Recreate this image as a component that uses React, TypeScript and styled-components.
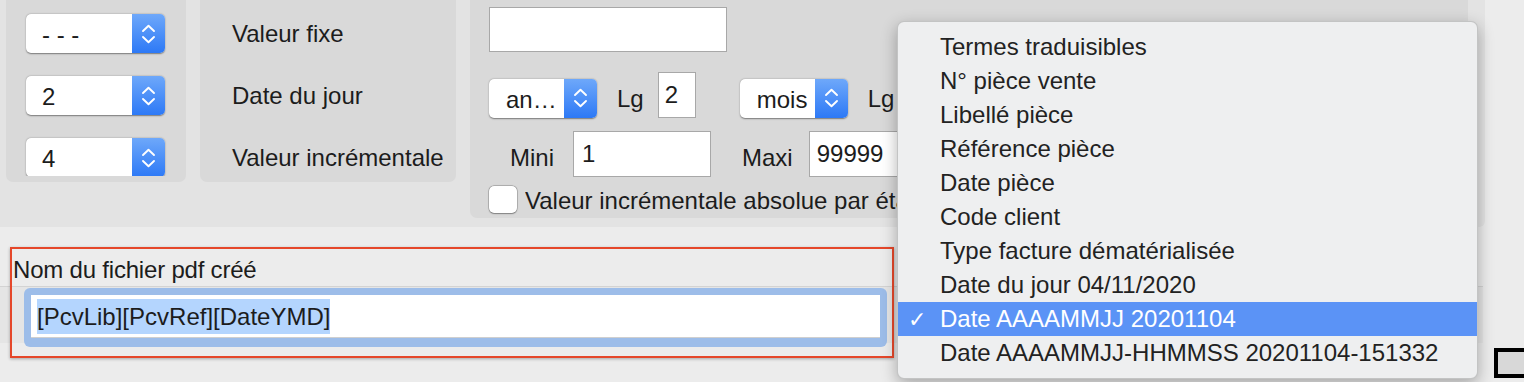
import React from 'react';
import styled, { createGlobalStyle } from 'styled-components';

const GlobalStyle = createGlobalStyle`
  body {
    margin: 0;
    background-color: #ececec;
    font-family: "Liberation Sans", Arial, sans-serif;
    color: #1c1c1c;
    overflow: hidden;
  }
`;

const Page = styled.div`
  position: relative;
  width: 1524px;
  height: 382px;
  overflow: hidden;
`;

const TopArea = styled.div`
  display: flex;
  align-items: flex-start;
  gap: 14px;
  width: 1485px;
  height: 227px;
  padding-left: 6px;
  box-sizing: border-box;
  background-color: #e3e3e3;
  border-bottom-right-radius: 6px;
`;

const Panel = styled.div<{ $w: number; $h: number }>`
  width: ${p => p.$w}px;
  height: ${p => p.$h}px;
  background-color: #d9d9d9;
  border-radius: 0 0 7px 7px;
  box-sizing: border-box;
  flex-shrink: 0;
`;

const SelectColumn = styled.div`
  display: flex;
  flex-direction: column;
  gap: 23px;
  padding: 14px 0 0 20px;
  height: 176px;
  box-sizing: border-box;
  overflow: hidden;
`;

const LabelColumn = styled.div`
  display: flex;
  flex-direction: column;
  gap: 34px;
  padding: 20px 0 0 32px;
`;

const Label = styled.span<{ $pt?: number; $ml?: number }>`
  font-size: 24px;
  line-height: 28px;
  padding-top: ${p => p.$pt || 0}px;
  margin-left: ${p => p.$ml || 0}px;
  white-space: nowrap;
  flex-shrink: 0;
`;

const ClippedLabel = styled(Label)`
  width: 372px;
  overflow: hidden;
`;

const SelectBox = styled.div<{ $w: number; $mt?: number; $ml?: number }>`
  display: flex;
  width: ${p => p.$w}px;
  height: 39px;
  margin-top: ${p => p.$mt || 0}px;
  margin-left: ${p => p.$ml || 0}px;
  border-radius: 5px;
  background-color: #fff;
  box-shadow: 0 0.5px 1.5px rgba(0, 0, 0, 0.45);
  flex-shrink: 0;
`;

const SelectText = styled.span<{ $pl: number }>`
  flex: 1;
  font-size: 24px;
  line-height: 28px;
  padding: 7px 0 0 ${p => p.$pl}px;
  white-space: nowrap;
  overflow: hidden;
`;

const SelectArrows = styled.div`
  width: 33px;
  display: flex;
  align-items: center;
  justify-content: center;
  border-radius: 0 5px 5px 0;
  background: linear-gradient(#6ea8fa, #2d79f6);
`;

const Arrows = () => (
  <svg width="15" height="20" viewBox="0 0 15 20" fill="none" stroke="#fff" strokeWidth="1.9" strokeLinecap="round" strokeLinejoin="round">
    <path d="M2 7 L7.5 1.8 L13 7" />
    <path d="M2 13 L7.5 18.2 L13 13" />
  </svg>
);

const Select = ({ value, width, pl, mt, ml }: { value: string; width: number; pl: number; mt?: number; ml?: number }) => (
  <SelectBox $w={width} $mt={mt} $ml={ml}>
    <SelectText $pl={pl}>{value}</SelectText>
    <SelectArrows>
      <Arrows />
    </SelectArrows>
  </SelectBox>
);

const FormColumn = styled.div`
  display: flex;
  flex-direction: column;
  padding: 7px 0 0 19px;
`;

const Row = styled.div<{ $h: number; $mt: number }>`
  display: flex;
  align-items: center;
  height: ${p => p.$h}px;
  margin-top: ${p => p.$mt}px;
`;

const TextInput = styled.div<{ $w: number; $h: number; $pl?: number; $ml?: number }>`
  width: ${p => p.$w}px;
  height: ${p => p.$h}px;
  margin-left: ${p => p.$ml || 0}px;
  padding: 8px 0 0 ${p => p.$pl || 6}px;
  box-sizing: border-box;
  background-color: #fff;
  border: 1px solid #a8a8a8;
  font-size: 24px;
  line-height: 28px;
  flex-shrink: 0;
`;

const Checkbox = styled.div`
  width: 28px;
  height: 27px;
  box-sizing: border-box;
  border-radius: 5px;
  background-color: #fff;
  box-shadow: 0 0 0 0.5px rgba(0, 0, 0, 0.3), 0 0.5px 1.5px rgba(0, 0, 0, 0.3);
  margin-right: 8px;
  flex-shrink: 0;
`;

const BottomArea = styled.div`
  height: 155px;
  padding: 20px 0 0 10px;
  box-sizing: border-box;
  background:
    linear-gradient(#d3d3d3, #d3d3d3) 0 59px / 1483px 1px no-repeat,
    linear-gradient(#e5e5e5, #e5e5e5) 0 60px / 1483px 56px no-repeat,
    #ececec;
`;

const Highlighted = styled.div`
  width: 884px;
  box-sizing: border-box;
  border: 2px solid #e5472a;
  box-shadow: 0 1px 3px rgba(0, 0, 0, 0.3);
  padding: 7px 5px 9px 0;
`;

const FieldLabel = styled.div`
  font-size: 24px;
  line-height: 28px;
  padding-left: 1px;
  margin-bottom: 4px;
  letter-spacing: -0.2px;
`;

const FocusRing = styled.div`
  margin-left: 12px;
  padding: 7px 7px 9px 7px;
  background-color: #9dbde9;
  border-radius: 6px;
`;

const FileInput = styled.div`
  height: 43px;
  box-sizing: border-box;
  background-color: #fff;
  border-bottom: 1px solid #cfcfcf;
  padding: 4px 0 0 6px;
`;

const Selection = styled.span`
  display: inline-block;
  background-color: #b4d5fe;
  font-size: 24px;
  line-height: 35px;
`;

const Menu = styled.div`
  position: absolute;
  left: 897px;
  top: 21px;
  width: 581px;
  padding: 8px 0;
  box-sizing: border-box;
  background-color: #eeeff0;
  border: 1px solid rgba(0, 0, 0, 0.18);
  border-radius: 7px;
  box-shadow: 0 5px 16px rgba(0, 0, 0, 0.3);
`;

const MenuItem = styled.div<{ $active?: boolean }>`
  display: flex;
  align-items: center;
  height: 34px;
  font-size: 24px;
  color: ${p => (p.$active ? '#fff' : '#222')};
  background-color: ${p => (p.$active ? '#5b93f6' : 'transparent')};
  white-space: nowrap;
`;

const Check = styled.span`
  width: 42px;
  padding-left: 10px;
  box-sizing: border-box;
  font-family: "DejaVu Sans", sans-serif;
  font-weight: bold;
  font-size: 22px;
`;

const CornerBox = styled.div`
  position: absolute;
  left: 1494px;
  top: 348px;
  width: 34px;
  height: 30px;
  box-sizing: border-box;
  border: 4px solid #000;
  background-color: #d8d8d8;
`;

const menuItems = [
  'Termes traduisibles',
  'N° pièce vente',
  'Libellé pièce',
  'Référence pièce',
  'Date pièce',
  'Code client',
  'Type facture dématérialisée',
  'Date du jour 04/11/2020',
  'Date AAAAMMJJ 20201104',
  'Date AAAAMMJJ-HHMMSS 20201104-151332',
];

const App = () => {
  const selected = 'Date AAAAMMJJ 20201104';

  return (
    <Page>
      <GlobalStyle />
      <TopArea>
        <Panel $w={180} $h={182}>
          <SelectColumn>
            <Select value="- - -" width={139} pl={16} />
            <Select value="2" width={139} pl={16} />
            <Select value="4" width={139} pl={16} />
          </SelectColumn>
        </Panel>
        <Panel $w={256} $h={182}>
          <LabelColumn>
            <Label>Valeur fixe</Label>
            <Label>Date du jour</Label>
            <Label>Valeur incrémentale</Label>
          </LabelColumn>
        </Panel>
        <Panel $w={998} $h={218}>
          <FormColumn>
            <TextInput $w={238} $h={45} />
            <Row $h={47} $mt={19}>
              <Select value="an…" width={108} pl={17} mt={7} />
              <Label $pt={9} $ml={20}>Lg</Label>
              <TextInput $w={38} $h={46} $pl={6} $ml={14}>2</TextInput>
              <Select value="mois" width={108} pl={17} mt={7} ml={44} />
              <Label $pt={9} $ml={20}>Lg</Label>
            </Row>
            <Row $h={46} $mt={13}>
              <Label $pt={8} $ml={21}>Mini</Label>
              <TextInput $w={138} $h={46} $pl={8} $ml={19}>1</TextInput>
              <Label $pt={8} $ml={31}>Maxi</Label>
              <TextInput $w={138} $h={46} $pl={7} $ml={16}>99999</TextInput>
            </Row>
            <Row $h={27} $mt={9}>
              <Checkbox />
              <ClippedLabel $pt={2}>Valeur incrémentale absolue par établissement</ClippedLabel>
            </Row>
          </FormColumn>
        </Panel>
      </TopArea>
      <BottomArea>
        <Highlighted>
          <FieldLabel>Nom du fichier pdf créé</FieldLabel>
          <FocusRing>
            <FileInput>
              <Selection>[PcvLib][PcvRef][DateYMD]</Selection>
            </FileInput>
          </FocusRing>
        </Highlighted>
      </BottomArea>
      <Menu>
        {menuItems.map(item => (
          <MenuItem key={item} $active={item === selected}>
            <Check>{item === selected ? '✓' : ''}</Check>
            {item}
          </MenuItem>
        ))}
      </Menu>
      <CornerBox />
    </Page>
  );
};

export default App;
